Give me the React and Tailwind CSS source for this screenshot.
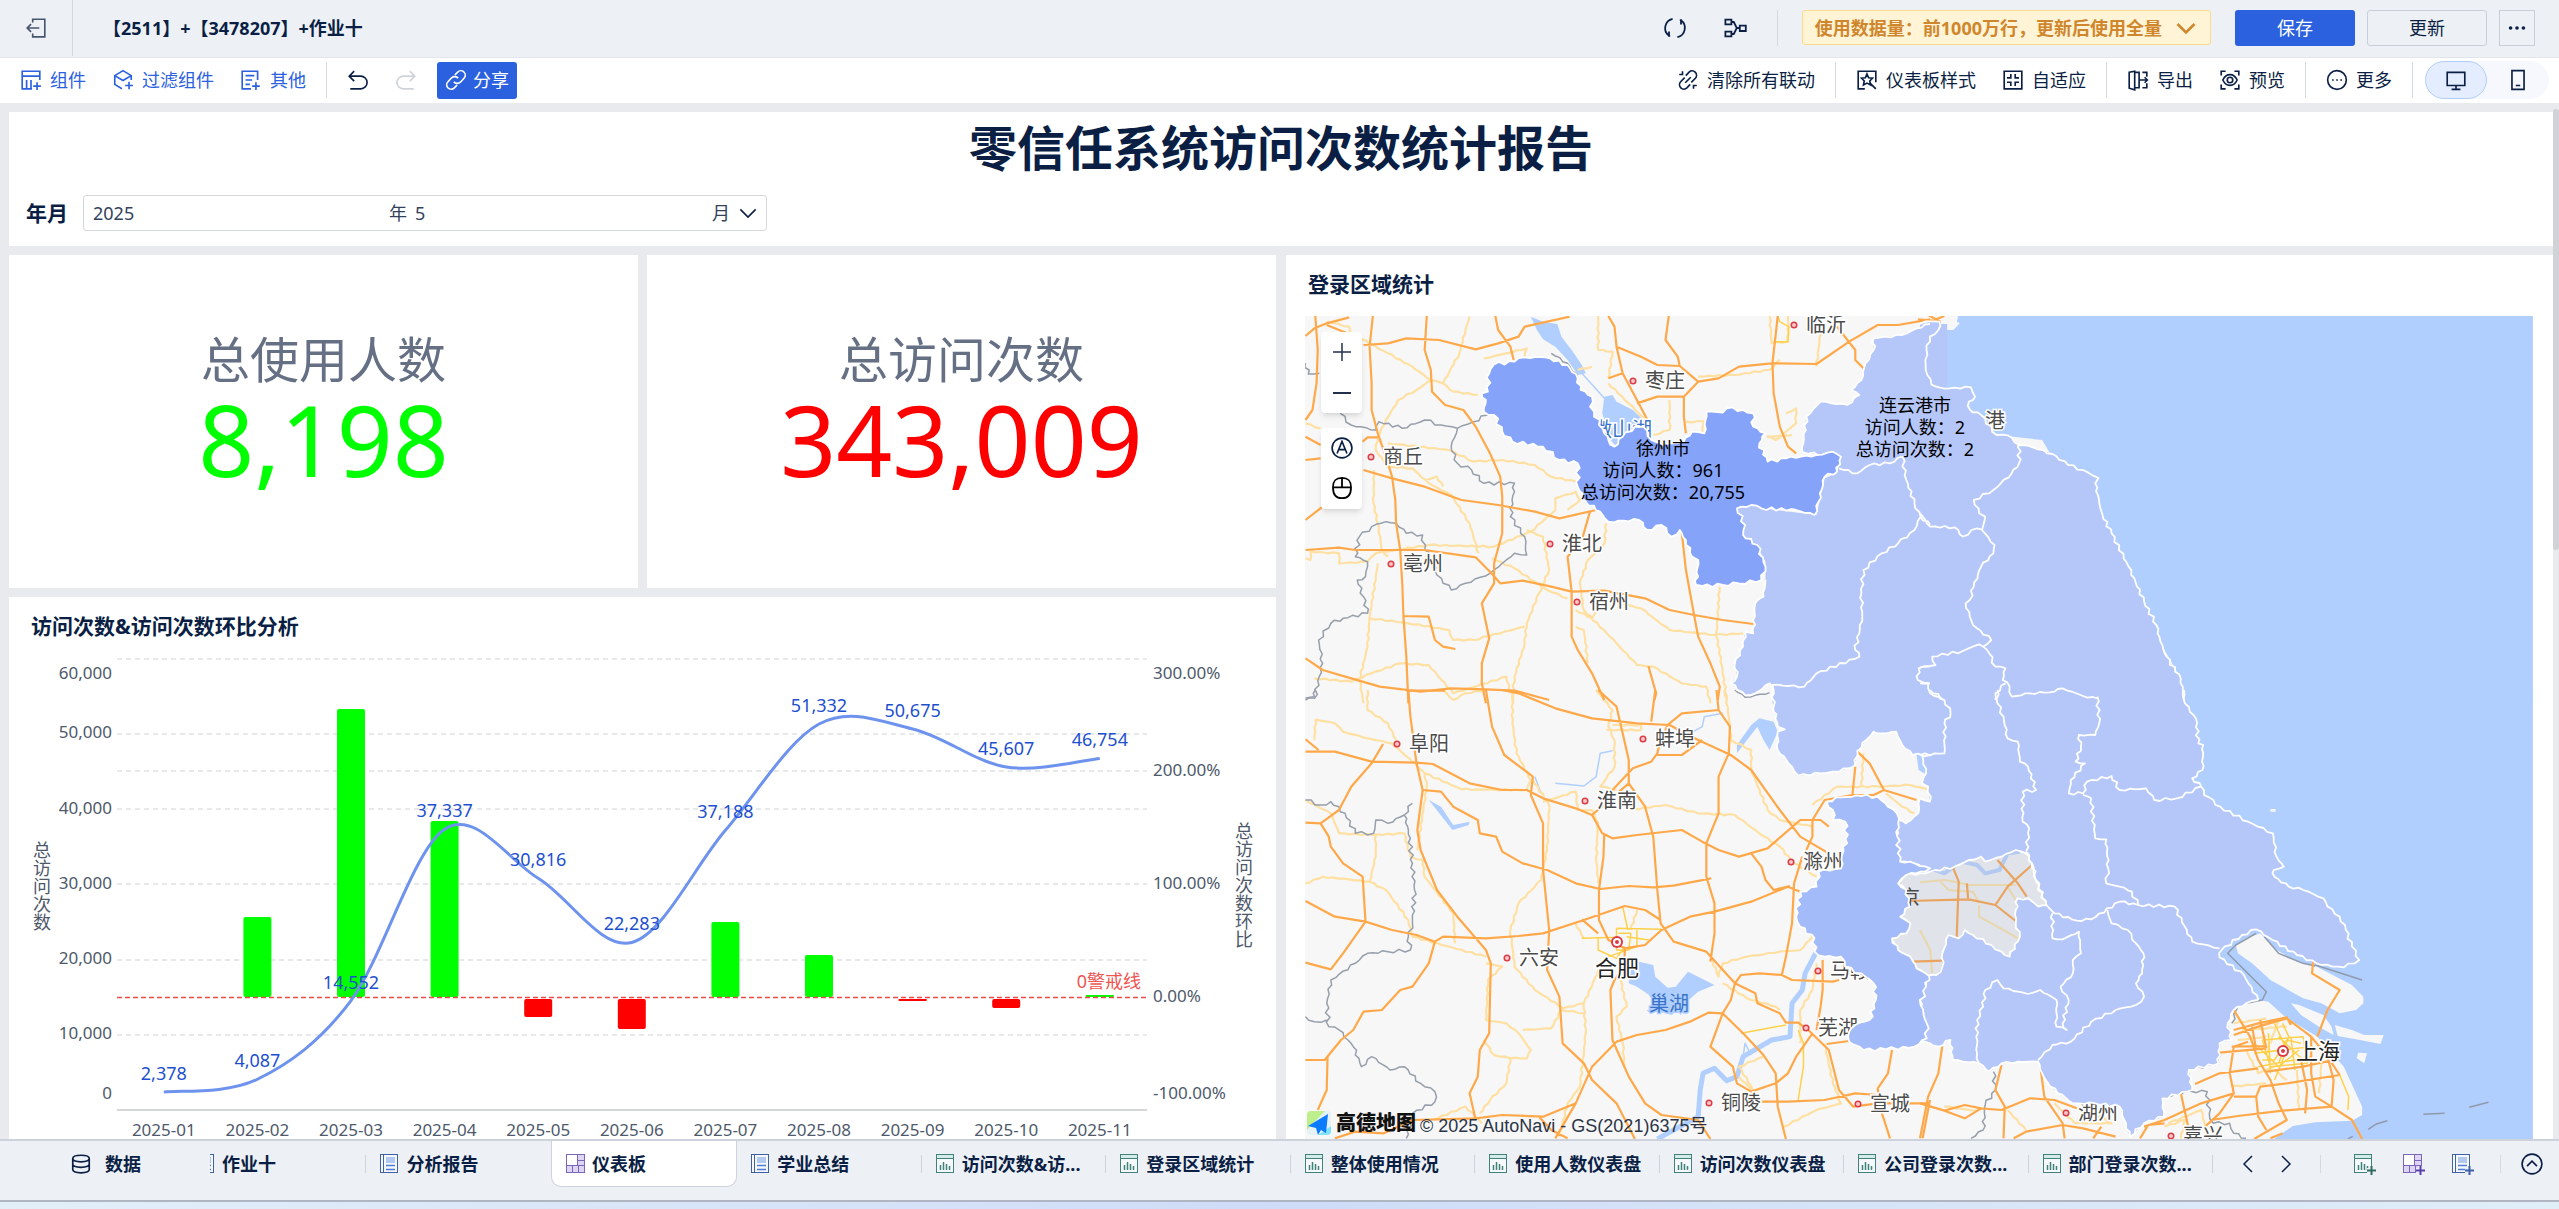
import React from 'react';
import { Ellipsis } from 'lucide-react';

const ICONS = {
  exit: <path d="M7 5V2h11v16H7v-3M13 10H2M5.500 6.500L2 10l3.500 3.500" />,
  refresh: <path d="M8 2.300A8 8 0 0 0 5 16.500M12 17.700A8 8 0 0 0 15 3.500M15 7V3.500h-1M5 13v3.500h1" />,
  tree: <path d="M2 3h5v4H2zM2 13h5v4H2zM14 8h5v4.500h-5zM7 5h2l2.500 5L9 15H7M11.500 10H14" />,
  widget: <path d="M18 10V2H2v16h9M2 6.500h16M6 10v8M10 10v8M15.500 12v7M12 15.500h7" />,
  filter: <path d="M17.500 10V6L10 1.500 2.500 6v8L9 18M2.500 6L10 10.500 17.500 6M15.500 11.500v7M12 15h7" />,
  other: <path d="M16 10V2H2v16h8M5 6h8M5 10h6M5 14h4M14.500 12v7M11 15.500h7" />,
  undo: <path d="M6.500 2L2 6.500 6.500 11M2 6.500h10.500a5.500 5.500 0 0 1 0 11.500H3" />,
  redo: <path d="M13.500 2L18 6.500 13.500 11M18 6.500H7.500a5.500 5.500 0 0 0 0 11.500H17" />,
  link: <path d="M9 5.500l2.500-2.700a4 4 0 0 1 5.800 5.600L14 12a4 4 0 0 1-6-.5M11 14.500l-2.500 2.700a4 4 0 0 1-5.800-5.600L6 8a4 4 0 0 1 6 .5" />,
  unlink: <path d="M8 6l3-3.200a4 4 0 0 1 5.700 5.600L13 12.200M12 14l-3 3.200a4 4 0 0 1-5.700-5.600L7 7.800M7.500 12.500l5-5M2 5h3V2M18 15h-3v3" />,
  style: <path d="M8 18H2V2h16v10M10 4.500l1.500 3.500 3.500.4-2.500 2.500.8 3.600L10 12.800l-3.200 1.700.7-3.600L5 8.400l3.500-.4zM13 13l5 5" />,
  fit: <path d="M2 2h16v16H2zM8 4.500V8H4.500M12 4.500V8h3.500M8 15.500V12H4.500M12 15.500V12h3.500" />,
  output: <path d="M2 3l5-1v17l-5-1.500zM7 3h4v14H7M14 3h4v4M14 17h4v-4M11 10h8M16 7.500l2.500 2.500-2.500 2.500" />,
  preview: <path d="M2 6V2h4M14 2h4v4M18 14v4h-4M6 18H2v-4M3.500 10c3-6.500 10-6.500 13 0-3 6.500-10 6.500-13 0zM10 7.500a2.500 2.500 0 1 0 0 5 2.500 2.500 0 0 0 0-5z" />,
  more: <path d="M10 1.500a8.500 8.500 0 1 0 0 17 8.500 8.500 0 0 0 0-17zM5.500 10h1.500M9.300 10h1.500M13 10h1.500" />,
  monitor: <path d="M2 3h16v12H2zM10 15v3.500M6 18.500h8" />,
  tablet: <path d="M4.500 1.500h11v17h-11zM8 15h4" />,
  database: <path d="M2.500 5c0-4 15-4 15 0s-15 4-15 0zM2.500 5v10c0 4 15 4 15 0V5M2.500 10c0 4 15 4 15 0" />,
  mouse: <path d="M2.500 9.500h15M10 1.500v8M10 1.500c-5 0-7.500 2-7.500 8s2.500 9 7.500 9 7.500-3 7.500-9-2.500-8-7.500-8z" />,
  satellite: <path d="M10 1a9 9 0 1 0 0 18 9 9 0 0 0 0-18zM5.500 15L10 4l4.500 11M7 11.500h6" />,
  down: <path d="M1.500 6L10 14.500 18.500 6" />,
  left: <path d="M14 2L6 10l8 8" />,
  right: <path d="M6 2l8 8-8 8" />,
  collapse: <path d="M10 1a9 9 0 1 0 0 18 9 9 0 0 0 0-18zM5.500 12L10 7.500 14.500 12" />,
};

const Icon = ({ name, className = 'size-[22px]', weight = 1.5 }) => (
  <svg viewBox="0 0 20 20" className={`${className} shrink-0`} fill="none" stroke="currentColor" strokeWidth={weight}>
    {ICONS[name]}
  </svg>
);

const SheetIcon = ({ type, plus }) => (
  <svg viewBox="0 0 23 22" className="h-[22px] w-[23px] shrink-0" fill="none">
    {type === 'chart' && (
      <g stroke="#3f837b">
        <rect x="1.500" y="1.500" width="17" height="18" fill="#fff" fillOpacity=".5" />
        <rect x="1.500" y="1.500" width="17" height="4" fill="#d5ebe7" />
        <path d="M5.500 12v5M8.500 9v8M11.500 11v6M14.500 13v4" strokeWidth="1.500" />
      </g>
    )}
    {type === 'report' && (
      <g stroke="#3f61a8">
        <rect x="1.500" y="1.500" width="17" height="18" fill="#fff" fillOpacity=".5" />
        <path d="M4.500 1.500v18" />
        <rect x="7.500" y="4.500" width="8" height="5" fill="#b3c8ee" stroke="#b3c8ee" />
        <path d="M7 12.500h9M7 16.500h9" stroke="#4d7bd6" strokeWidth="1.500" />
      </g>
    )}
    {type === 'board' && (
      <g stroke="#7a67ba">
        <rect x="1.500" y="1.500" width="18" height="18" fill="#ded5f5" />
        <rect x="1.500" y="1.500" width="11" height="11" fill="#fff" />
        <path d="M12.500 7.500h7M12.500 12.500h7M7.500 12.500v7M13.500 12.500v7" />
      </g>
    )}
    {plus && (
      <g strokeWidth="2">
        <path d="M18.500 13v9M14 17.500h9" stroke="#edf1f6" strokeWidth="5" />
        <path d="M18.500 13v9M14 17.500h9" stroke={plus} />
      </g>
    )}
  </svg>
);

const Divider = ({ className }) => <div className={`w-px bg-[#d5d9e0] ${className}`} />;

const ToolButton = ({ icon, children, className = '' }) => (
  <button className={`flex items-center gap-2 ${className}`}>
    <Icon name={icon} />
    {children}
  </button>
);

const Header = () => (
  <header className="flex h-[58px] shrink-0 items-center border-b border-[#e2e5ea] bg-[#edf1f6] pb-[2px]">
    <button aria-label="退出" className="flex w-[72px] justify-center text-[#48566d]">
      <Icon name="exit" />
    </button>
    <Divider className="h-14" />
    <h1 className="ml-[30px] flex-1 text-[18px] font-bold [text-spacing-trim:space-all]">【2511】+【3478207】+作业十</h1>
    <button aria-label="刷新" className="mr-9"><Icon name="refresh" className="size-6" /></button>
    <button aria-label="血缘"><Icon name="tree" className="size-6" /></button>
    <Divider className="ml-[30px] h-9" />
    <button className="ml-6 flex h-[35px] items-center gap-[14px] rounded-[3px] border border-[#ffdb8a] bg-[#fff4d6] pr-[14px] pl-3 font-bold text-[#cf862c]">
      使用数据量：前1000万行，更新后使用全量
      <Icon name="down" className="size-5" weight={2.5} />
    </button>
    <button className="ml-6 h-9 w-[120px] rounded-[3px] bg-[#2b61de] text-white">保存</button>
    <button className="ml-3 h-9 w-[120px] rounded-[3px] border border-[#c9cfd8]">更新</button>
    <button aria-label="更多操作" className="mr-6 ml-3 flex h-9 w-9 items-center justify-center border border-[#c9cfd8]">
      <Ellipsis size={22} />
    </button>
  </header>
);

const Toolbar = () => (
  <nav className="flex h-[45px] shrink-0 items-center bg-white pr-[10px] pb-px pl-5">
    <div className="flex items-center gap-[26px] text-[#2b61de]">
      <ToolButton icon="widget">组件</ToolButton>
      <ToolButton icon="filter">过滤组件</ToolButton>
      <ToolButton icon="other">其他</ToolButton>
    </div>
    <Divider className="ml-5 h-9" />
    <button aria-label="撤销" className="ml-5"><Icon name="undo" /></button>
    <button aria-label="重做" className="ml-[26px] text-[#d0d4da]"><Icon name="redo" /></button>
    <button className="ml-5 flex h-[37px] items-center gap-[6px] rounded-[3px] bg-[#2b61de] px-2 text-white">
      <Icon name="link" />
      分享
    </button>
    <div className="flex-1" />
    <ToolButton icon="unlink">清除所有联动</ToolButton>
    <Divider className="mx-5 h-9" />
    <ToolButton icon="style" className="mr-[26px]">仪表板样式</ToolButton>
    <ToolButton icon="fit">自适应</ToolButton>
    <Divider className="mx-5 h-9" />
    <ToolButton icon="output" className="mr-[26px]">导出</ToolButton>
    <ToolButton icon="preview">预览</ToolButton>
    <Divider className="mx-5 h-9" />
    <ToolButton icon="more">更多</ToolButton>
    <Divider className="mr-3 ml-5 h-9" />
    <div className="flex rounded-full bg-[#f6f8fd]">
      <button aria-label="电脑端" className="flex h-[38px] w-[62px] items-center justify-center rounded-full border border-[#b3cefa] bg-[#e3edfd]">
        <Icon name="monitor" />
      </button>
      <button aria-label="移动端" className="flex h-[38px] w-[62px] items-center justify-center">
        <Icon name="tablet" />
      </button>
    </div>
  </nav>
);

const TitleCard = () => (
  <section className="bg-white pb-[15px]">
    <h2 className="text-center text-[48px] leading-[72px] font-bold">零信任系统访问次数统计报告</h2>
    <div className="mt-[11px] flex items-center pl-[17px]">
      <label htmlFor="year" className="w-[57px] text-[21px] font-bold">年月</label>
      <div className="flex h-9 w-[684px] items-center rounded-[3px] border border-[#d5d8de] px-[9px] text-[#33415c]">
        <input id="year" defaultValue="2025" className="w-[296px] outline-none" />
        <span>年</span>
        <input aria-label="月份" defaultValue="5" className="ml-2 min-w-0 flex-1 outline-none" />
        <span>月</span>
        <Icon name="down" className="ml-[9px] size-[18px] text-[#0b1f45]" weight={1.8} />
      </div>
    </div>
  </section>
);

const Kpi = ({ label, value, color }) => (
  <section className="flex h-[333px] flex-col items-center bg-white pt-20">
    <div className="text-[49px] leading-[48px] text-[#667085]">{label}</div>
    <div className={`text-[98px] leading-[112px] ${color}`}>{value}</div>
  </section>
);

const VISITS = [
  ['2025-01', 2378, 0, 0],
  ['2025-02', 4087, 917, 997],
  ['2025-03', 14552, 709, 997],
  ['2025-04', 37337, 821, 997],
  ['2025-05', 30816, 999, 1017],
  ['2025-06', 22283, 999, 1029],
  ['2025-07', 37188, 922, 997],
  ['2025-08', 51332, 955, 997],
  ['2025-09', 50675, 999, 1001],
  ['2025-10', 45607, 999, 1008],
  ['2025-11', 46754, 995, 997],
];

const colX = (i) => 163.8 + i * 93.6;
const valY = (v) => 1110 - v * 0.00752;

const smoothPath = (pts) => {
  let d = `M${pts[0].join(' ')}`;
  for (let i = 0; i < pts.length - 1; i++) {
    const p0 = pts[i - 1] || pts[i];
    const p1 = pts[i];
    const p2 = pts[i + 1];
    const p3 = pts[i + 2] || p2;
    d += `C${p1[0] + (p2[0] - p0[0]) / 6} ${p1[1] + (p2[1] - p0[1]) / 6} ${p2[0] - (p3[0] - p1[0]) / 6} ${p2[1] - (p3[1] - p1[1]) / 6} ${p2[0]} ${p2[1]}`;
  }
  return d;
};

const VisitChart = () => (
  <section className="overflow-hidden bg-white">
    <h3 className="pt-3 pl-[22px] text-[21px] leading-[34px] font-bold">访问次数&amp;访问次数环比分析</h3>
    <svg viewBox="9 643 1267 500" className="w-full">
      <g stroke="#dfe1e4" strokeDasharray="5 4" strokeWidth="1.500">
        {[659, 734, 771, 809, 884, 960, 1035].map((y) => <path key={y} d={`M117 ${y}H1147`} />)}
      </g>
      <path d="M117 1110H1147" stroke="#c6c9ce" strokeWidth="1.500" />
      {VISITS.map(([m, , y1, y2], i) => y2 > 0 && (
        <rect key={m} x={colX(i) - 14} y={y1} width="28" height={y2 - y1} rx={y2 - y1 > 4 ? 2 : 0} fill={y2 === 997 ? '#00ff00' : '#ff0000'} />
      ))}
      <path d="M117 997.500H1147" stroke="#ec4a4a" strokeDasharray="5 3" strokeWidth="1.500" />
      <path d={smoothPath(VISITS.map(([, v], i) => [colX(i), valY(v)]))} fill="none" stroke="#6e93ee" strokeWidth="3" />
      <g className="text-[18px]" fill="#1d50cf" textAnchor="middle">
        {VISITS.map(([m, v], i) => <text key={m} x={colX(i)} y={valY(v) - 12}>{v.toLocaleString('en-US')}</text>)}
      </g>
      <text x="1141" y="988" textAnchor="end" fill="#ef5552" className="text-[18px]">0警戒线</text>
      <g className="text-[17px]" fill="#4e596b">
        {[[60, 673], [50, 732], [40, 808], [30, 883], [20, 958], [10, 1033], [0, 1093]].map(([v, y]) => (
          <text key={v} x="112" y={y + 6} textAnchor="end">{v ? `${v},000` : '0'}</text>
        ))}
        {[['300.00%', 673], ['200.00%', 770], ['100.00%', 883], ['0.00%', 996], ['-100.00%', 1093]].map(([t, y]) => (
          <text key={t} x="1153" y={y + 6}>{t}</text>
        ))}
        {VISITS.map(([m], i) => <text key={m} x={colX(i)} y="1136" textAnchor="middle">{m}</text>)}
      </g>
      <g className="text-[18px]" fill="#4e596b" textAnchor="middle">
        {[...'总访问次数'].map((c, i) => <text key={i} x="42" y={857 + i * 18}>{c}</text>)}
        {[...'总访问次数环比'].map((c, i) => <text key={i} x="1244" y={838 + i * 18}>{c}</text>)}
      </g>
    </svg>
  </section>
);

/* Map geometry is kept in four tiles, each with its own origin and scale. */
const TILES = {
  nw: 'translate(1290 250) scale(.40816 .33333)',
  ne: 'translate(1920 250) scale(.4075 .33333)',
  sw: 'translate(1290 690) scale(.40816 .33333)',
  se: 'translate(1920 690) scale(.4075 .33333)',
};

const SEA = {
  ne: ['95,190 90,215 97,220 80,240 45,240 24,260 16,300 14,345 18,375 28,404 60,416 125,412 135,440 120,455 122,478 150,495 188,555 300,570 640,1285 645,1360 1504,1360 1504,190'],
  se: ['640,-10 645,720 735,802 830,930 855,935 900,985 935,1010 975,1040 1040,1130 1085,1250 1085,1275 1060,1292 970,1297 915,1308 865,1350 1504,1350 1504,-10'],
};

const LAKES = {
  nw: [
    '590,200 605,240 620,268 650,290 680,330 705,375 725,370 715,345 690,300 665,260 655,222 620,215',
    '770,440 790,435 800,455 840,480 870,515 880,550 845,530 815,560 800,590 785,570 765,490',
  ],
  sw: [
    '855,815 890,825 895,860 925,893 945,890 975,845 1000,860 1040,885 1000,905 935,975 905,965 880,915 850,890 830,880 835,840',
    '1095,190 1095,165 1130,105 1150,85 1185,95 1195,125 1175,180 1160,150 1145,110 1120,150',
    '340,330 370,350 400,405 440,395 438,405 398,420',
    '1535,195 1560,195 1568,260 1540,240',
  ],
};

const RIVERS = {
  sw: ['1290,785 1262,850 1255,900 1230,940 1225,1040 1180,1050 1110,1100 1095,1160 1070,1172 1040,1135 1012,1150 1005,1200 1000,1280 900,1347'],
};

const STREAMS = {
  nw: ['715,370 745,410 770,445'],
  sw: ['650,280 720,288 750,260 760,190 790,182', '600,260 615,310', '980,130 1010,110 1015,80 1060,70', '1110,1100 1115,1060 1130,1095'],
};

const ISLANDS = {
  ne: ['45,190 95,190 90,215 97,220 82,240 60,235 48,225'],
  se: [
    '775,765 800,745 835,730 875,780 925,815 970,828 1060,885 1088,920 1088,940 1070,960 1030,970 985,940 940,925 860,870 815,820 780,790',
    '910,940 930,945 990,975 1010,1010 1015,1035 985,1015 935,975',
    '1018,1005 1060,1020 1090,1035 1138,1035 1130,1062 1080,1050 1025,1038',
    '1075,1088 1097,1090 1090,1120 1072,1105',
    '860,357 873,357 873,365 860,365',
  ],
};

const MINOR_ROADS = {
  nw: [
    '150,250 240,310 300,350 345,390 310,420 265,450 235,510 215,560',
    '440,200 430,240 415,310 375,400 345,390', '375,400 400,425 460,435', '90,215 145,230 150,260',
    '755,198 755,300 790,305 780,385', '740,350 705,360', '475,325 530,310 580,295 575,320',
    '1000,380 1090,375 1175,360 1200,330', '1175,198 1180,280 1220,275 1220,198',
    '780,400 830,460 870,510', '930,450 930,540 890,555', '970,515 1015,515 1010,545',
    '1215,490 1240,475 1240,520 1190,570 1170,560 1230,555', '1290,350 1300,240',
    '215,560 210,600 240,650 300,655 340,700 395,735 440,820 462,910',
    '240,580 390,600 450,635 520,630 600,645 640,680 700,695', '330,690 360,680 375,710',
    '205,660 205,760 215,820 225,900 240,920',
    '38,925 50,930 50,905 120,910 120,940 190,935 210,910 340,885 500,890 590,845 650,780 650,745 700,725 710,750 680,780',
    '495,925 550,955 630,1020 680,1045', '580,840 620,860 635,960 610,1030 580,1120 575,1180 550,1280 545,1360',
    '775,820 770,880 730,930 710,1000 720,1080 800,1180 850,1245 890,1250 960,1300 1020,1310 1030,1360',
    '810,1060 860,1075 930,1140 1040,1155 1110,1150', '195,1105 290,1120 390,1140 400,1170 450,1170 575,1130',
    '215,940 195,1105 190,1190 170,1290 180,1360', '60,1285 150,1295 200,1270 270,1240 340,1245 400,1330 530,1280 540,1330',
    '1052,1010 1045,1160 1060,1260 1070,1350', '38,520 75,535', '700,1130 720,1140 730,1240', '700,1080 740,1105 750,1080',
  ],
  sw: [
    '62,88 60,150', '62,88 110,100 130,125 190,145 250,160 300,215 330,250 420,298 580,300 590,270 555,190 545,100 545,0',
    '190,0 190,60 240,100 260,150', '375,0 400,30 430,10 480,0',
    '775,120 860,120 860,105 790,105', '750,0 790,60 780,110 795,150 795,230 775,265 760,290 800,300',
    '1065,0 1075,80 1080,150 1130,180 1130,240', '330,250 335,290 312,480',
    '38,330 100,370 120,430 200,435 280,430 295,500 325,510 330,560 400,670 405,760',
    '38,580 80,560 195,575 235,600 290,690 300,740 480,800', '210,435 210,500 195,575',
    '595,270 635,345 630,480 615,570 560,640 540,720 550,830 600,900 670,955 720,940 760,830',
    '620,335 700,305 705,360 740,360 755,400 750,500 755,580', '830,360 920,345 1000,370 1090,375 1150,430 1200,470 1235,520 1290,560',
    '1280,410 1200,390 1170,360 1130,240', '1280,345 1340,290 1440,290 1520,285 1568,300',
    '1030,800 1050,860 1060,820 1120,800 1200,785 1250,780 1280,740', '1060,880 1120,925 1190,950 1200,960',
    '1290,820 1280,900 1250,960 1250,1060', '480,820 520,830 485,870 480,990 530,1000 560,1030 590,1080 580,1105 540,1105 500,1095 475,1050',
    '540,1105 530,1180 490,1230 465,1270', '570,1020 640,1015 665,960 720,970', '720,940 725,1030 710,1190 680,1240 660,1340',
    '810,870 825,950 800,980 815,1060 820,1130', '1405,190 1400,290', '1310,1062 1330,1180 1350,1240 1290,1260 1210,1310',
    '700,700 720,745', '1100,1160 1140,1210 1100,1130 1160,1100', '350,1290 430,1250 470,1300', '850,660 835,720', '1460,310 1500,350 1530,370',
  ],
  se: [
    '770,1000 850,985', '780,1050 850,1040', '765,1190 850,1180', '925,1140 930,1260', '985,1120 980,1210', '610,1300 690,1260 700,1310',
    '215,1260 260,1320', '330,1240 380,1300 470,1300 430,1270', '600,1310 650,1290 640,1345', '800,1080 830,1150 870,1130', '790,1020 900,1010',
    '880,990 850,1090', '870,1140 900,1170', '60,1250 140,1262',
  ],
};

const CITY_ROADS = {
  nw: ['1195,198 1200,215 1222,230 1220,275 1185,275'],
  sw: [
    '715,745 800,742', '800,715 910,718', '815,650 828,720', '755,740 755,780 800,805 820,770', '825,740 880,750', '1105,1030 1215,1005',
    '1245,1020 1258,1060 1258,1130 1245,1230', '800,715 800,780 830,780 835,730 805,730', '850,720 850,770 780,800',
  ],
  se: [
    '840,1050 940,1040 950,1120 860,1130 840,1050', '870,1000 900,1080 870,1170', '820,1090 960,1070 1000,1090', '855,1030 860,1150',
    '910,1040 920,1140', '1030,1155 1052,1220 1050,1260', '840,1110 870,1110 900,1050 935,1060', '880,1040 940,1110', '890,1000 905,1040 880,1120',
    '820,1060 880,1130 930,1080', '830,1130 960,1100',
  ],
};

const HIGHWAYS = {
  nw: [
    '38,258 60,235 90,220 145,202', '90,225 140,250', '62,198 68,300 65,400 55,480 38,510',
    '203,198 195,290 200,400 200,480 215,550 235,620 250,680 258,750 260,820 270,900 275,1000 278,1100 285,1220 290,1360',
    '335,198 330,300 345,360 348,425 380,465 425,480 455,530 490,610 515,680 520,740 520,850 500,940 500,1000 470,1060 488,1165 470,1240 470,1300 480,1360',
    '180,285 240,280 285,265 365,270 455,298 510,280 560,260 575,230 685,200', '503,198 510,240 540,290 548,330',
    '780,198 795,230 800,290 815,370 850,450 880,520 880,555', '800,290 860,320 900,345 955,348 1000,395 965,440 965,500 970,550',
    '780,385 815,370', '928,198 920,270 950,320 955,348', '1000,395 1050,385 1100,350 1180,340 1290,342 1370,275 1440,225 1490,225 1568,208',
    '1195,198 1182,340 1185,430 1200,530 1220,590 1240,610', '1340,230 1385,300 1385,330 1405,355', '850,460 900,440 965,440',
    '180,660 250,685 330,710 420,750 510,765 600,785 660,805 750,780', '38,810 80,770', '38,560 75,585', '38,630 75,625', '178,575 190,562 215,562',
    '38,900 120,893 160,900 330,900 455,922 490,965 515,1000 570,992 640,1010 690,1025 770,1022 870,1045 930,1080 990,1095 1060,1110 1135,1122',
    '735,785 715,870 680,920 690,1025 690,1160 705,1200 740,1270 770,1350', '960,850 970,960 990,1095 1000,1160 1030,1240 1053,1310 1048,1350',
    '278,1098 340,1100 355,1170 375,1190 405,1197', '38,1225 80,1260 150,1285 220,1310 320,1325 395,1315 480,1318 550,1322 635,1350', '878,1248 897,1330 893,1350',
  ],
  ne: ['-5,208 30,212 60,198', '20,195 50,215'],
  sw: [
    '290,0 295,80 310,220 325,300 312,420 320,480 360,600 410,680 480,780 492,820 488,1030 465,1080 460,1160 440,1210 455,1290', '285,2 380,2',
    '38,185 110,185 200,215 310,218 350,222 440,280 520,300 580,300 620,325 700,355 740,375 765,430 790,445 850,435 960,420 1010,455 1050,480 1100,500 1170,475 1250,390 1300,390 1320,410',
    '38,148 70,180', '38,398 75,400 120,360 150,290 200,220 228,162', '75,400 95,440 100,470 130,520 178,560 185,695 130,790 100,838 38,818',
    '38,633 110,680 185,695 250,720 310,735 355,755 375,740 480,745 560,738 620,730 720,690 820,648 870,660 908,690',
    '480,0 495,110 525,195 595,260 590,315 620,400 620,540 635,720 630,840 660,920 668,1060 720,1120 740,1170 800,1240 845,1347',
    '520,0 560,10 650,55 740,85 850,100 930,105 1000,150 1080,195 1130,240 1200,360 1250,440 1320,490',
    '755,0 800,50 815,130 830,210 830,280 870,350 890,440 900,600 908,700 940,755 1020,785 1090,880 1140,910 1145,940 1200,970 1215,998 1245,998 1270,1020 1320,1080 1345,1200 1380,1250 1440,1240 1568,1240',
    '895,0 885,95', '1045,0 1050,60 960,70 925,105 905,165 900,190 885,215 840,235 790,300', '900,195 960,195 1010,150',
    '1050,60 1078,110 1075,190 1050,260 1050,370 1020,460 1020,560 1040,640 1040,730 1030,815',
    '325,300 370,305 400,350 460,390 465,430 505,440 520,485 570,520 630,540 700,580 760,597 830,588 890,592 940,587 1032,565',
    '770,430 768,500 757,600 757,690 780,750 820,775 870,765 910,720 980,680 1040,665 1130,635 1220,590 1250,605', '1130,490 1155,530 1165,570 1185,600 1225,588',
    '830,280 740,375', '1255,500 1235,580 1230,700 1215,800 1205,855', '1385,230 1378,315 1430,315 1455,300 1535,330',
    '1378,315 1310,330 1280,390 1280,440 1265,480', '1390,185 1420,220 1455,300', '1090,880 1105,855 1150,850 1205,855 1230,870 1330,875 1345,870',
    '1090,880 1080,930 1060,970 1025,968 980,995 920,1020 850,1035 800,1055 740,1130 700,1240 650,1345',
    '1060,970 1110,1030 1160,1095 1190,1150 1195,1250 1215,1347', '1060,970 1030,1070 1085,1130 1095,1180 1130,1205 1190,1180 1220,1150 1240,1100 1280,1030',
    '1130,1235 1220,1235 1310,1230 1385,1210 1440,1215', '820,770 820,830 795,870 785,900 790,1050 830,1160 870,1240 910,1275 1000,1290 1030,1347',
    '1305,810 1305,900 1300,950 1290,1020', '1370,1053 1315,1062', '1475,1080 1465,1150 1440,1195 1445,1250 1470,1345', '1568,1230 1550,1345',
    '355,755 340,820 300,890 270,900 225,960 180,965 155,1020 125,1050 85,1110 38,1110', '92,1100 90,1200 68,1260', '715,688 755,730',
    '110,1345 160,1325 230,1330 300,1290 455,1285 520,1275 620,1280 700,1240', '610,1280 640,1320 680,1345',
  ],
  se: [
    '770,960 810,1040 830,1110 860,1170 880,1240 900,1290 820,1347', '770,1035 830,1010 900,985 960,1040 1000,1100 1030,1155',
    '805,1055 770,1070 760,1150 770,1210 735,1270 700,1310', '770,1020 830,1000 900,982 910,1005', '735,1088 850,1075', '675,1182 735,1150 830,1135', '850,1145 940,1130 1015,1110',
    '960,1040 960,1150 970,1220 1010,1250 1060,1290 1085,1347', '1000,1100 1015,1170 1010,1250 890,1262 780,1278 715,1290', '935,1110 950,1200 945,1270',
    '770,1220 825,1220 835,1190 900,1180 1030,1155', '825,1220 830,1280 850,1320', '835,990 850,1075', '815,1010 825,1080', '550,1310 600,1290 690,1240 770,1210',
    '640,1210 660,1320', '765,1070 850,1068', '965,812 962,850 1030,900 1000,960 975,1040', '55,1065 45,1150 20,1220 0,1345', '200,1125 185,1200 208,1250 205,1345',
    '295,1125 305,1220 350,1300 355,1345', '0,1240 60,1262 110,1245 150,1255 200,1260 270,1225 330,1230 385,1255', '60,1262 110,1285 150,1255',
    '230,1345 260,1325 350,1305 400,1315 480,1340', '425,1345 445,1310', '540,1345 560,1305 600,1300', '860,1345 890,1330',
  ],
};

const PROVINCES = {
  nw: [
    '38,340 45,372 72,370', '123,490 150,525 210,540 218,515 275,535 330,510 370,525 410,535 395,590 410,640 445,660 475,700 550,700 540,800 575,860 580,915 550,910 520,940 490,970 430,1000 395,1020 360,975 350,930 330,900 325,855 285,850 260,820 235,815 200,830 170,860 160,920 190,935 185,980 165,990 180,1040 190,1090 130,1105 100,1120 70,1170 80,1240 60,1345 38,1350',
    '410,535 450,515 490,487', '640,310 680,340 705,385',
  ],
  ne: ['50,215 58,250'],
  sw: [
    '38,330 75,345 100,335 135,370 160,430 205,430 210,390 240,400 280,375 300,340',
    '280,375 290,420 300,520 305,600 300,700 290,740 295,780 240,785 190,790 160,820 100,870 90,940 95,1010 120,1020 155,1070 175,1130 200,1100 245,1140 280,1130 320,1180 355,1205 355,1235 300,1270 285,1345',
    '38,980 60,995 90,990', '1090,0 1115,22 1175,8', '38,25 60,20 62,0',
  ],
  se: [
    '180,1145 185,1200 160,1245 155,1320 125,1345', '595,1225 650,1205 705,1205 710,1270 720,1300 760,1300 770,1330 800,1345',
    '735,1060 733,1120 655,1140', '780,945 765,1000',
  ],
};

const SEA_LINES = {
  se: ['825,730 775,765 755,790 850,905 840,930 780,945', '970,825 1085,870', '845,740 880,790 940,820 970,828', '1235,1273 1287,1270', '1348,1252 1395,1237', '1100,1318 1120,1302 1147,1292', '1050,1347 1062,1339'],
};

const COAST_NE = '0,222 30,214 48,215 45,240 24,260 16,300 14,345 18,375 28,404 60,416 125,412 135,440 120,455 122,478 150,495 188,555 215,556 243,585 265,587 325,612 363,645 400,660 438,684 430,700 440,760 448,795 470,850 512,950 550,1055 580,1125 590,1175 605,1220 640,1285 648,1350';
const COAST_SE = '648,0 650,40 678,88 683,160 695,165 693,240 668,265 690,290 697,315 720,330 725,345 805,395 866,430 875,500 893,530 868,540 870,560 905,590 940,600 990,625 1000,650 1030,680 1045,720 1060,770 1078,810 1040,832 985,825 925,795 865,750 825,718 790,735 740,780 735,802 795,855 830,930';
const SOUTH_SE = '830,930 800,940 770,960 755,1000 765,1050 735,1060 733,1120 660,1140 668,1200 595,1225 598,1280 550,1300 515,1340 490,1250 430,1240 375,1240 320,1190 300,1150 290,1115 240,1115 200,1120 170,1145 145,1120 80,1110 75,1050 45,1070 0,1050 10,1010 0,930 20,860';
const ENCLAVE_SE = '0,195 5,195 15,250 5,280 20,290 24,335 0,325 -4,370 -35,400 -55,390 -58,440 -50,515 0,525';
const WEST_NW = '1568,222 1535,235 1500,255 1430,265 1430,300 1410,340 1400,390 1375,420 1395,435 1365,465 1300,455 1265,500 1255,605 1350,625';
const WEST_NW2 = '1165,990 1160,1040 1140,1060 1135,1150 1115,1145 1110,1190 1090,1240 1095,1280 1080,1300 1115,1335 1140,1330 1175,1300 1182,1310';
const WEST_SW = '1182,-5 1185,50 1195,110 1212,118 1195,125 1195,180 1230,230 1245,257 1300,250 1345,245 1385,225 1390,182 1412,150 1430,125 1450,130 1485,125 1500,165 1525,195 1568,195';

const LIGHT = {
  nw: [`1610,222 ${WEST_NW} 1340,670 1310,685 1290,795 1155,775 1135,765 1095,775 1105,825 1110,855 1145,890 1165,935 ${WEST_NW2} 1182,1360 1610,1360`],
  ne: [`${COAST_NE} 648,1360 0,1360`],
  sw: [`${WEST_SW} 1600,195 1600,-10`],
  se: [`0,-10 648,-10 ${COAST_SE} ${SOUTH_SE} 0,560 ${ENCLAVE_SE.split(' ').reverse().join(' ')}`],
};

const XUZHOU = '500,343 550,335 575,322 625,322 680,345 705,385 712,420 740,440 735,470 745,485 770,550 780,570 795,590 815,560 845,530 865,530 885,570 915,585 965,575 985,545 1015,550 1020,485 1060,488 1070,475 1110,480 1135,490 1135,530 1165,550 1150,580 1170,635 1215,625 1290,615 1330,605 1350,620 1340,665 1310,680 1295,755 1285,795 1240,780 1155,775 1130,765 1095,775 1115,825 1110,855 1145,885 1165,950 1155,990 1100,1000 1060,1005 1010,1008 995,1005 1000,930 985,920 970,870 955,840 935,860 910,825 875,840 855,810 780,815 760,785 725,755 705,710 705,640 660,630 620,590 545,575 520,545 500,495 475,485 480,450 470,430 485,425 488,370 500,343';
const NANJING = '1315,335 1350,322 1400,318 1440,320 1465,350 1487,370 1490,400 1488,440 1495,515 1530,520 1568,535 1545,545 1510,555 1490,580 1510,600 1518,650 1495,680 1520,700 1510,730 1475,745 1490,780 1520,800 1535,835 1566,858 1558,890 1545,945 1560,1000 1560,1045 1530,1070 1460,1078 1405,1080 1370,1055 1370,1025 1385,1005 1420,990 1435,930 1430,880 1410,860 1360,830 1350,800 1310,800 1285,785 1285,745 1250,710 1240,680 1250,605 1290,590 1295,545 1350,535 1355,470 1365,460 1360,395 1330,390 1330,360 1315,335';
const ZHENJIANG = '-54,580 -36,555 0,550 25,545 85,530 120,510 150,500 160,515 200,500 235,480 260,490 275,520 285,570 310,645 290,650 265,625 240,625 235,660 235,700 245,740 220,800 200,785 175,765 130,735 110,720 95,745 70,735 55,790 55,830 40,855 20,858 -11,835 -26,800 -56,780 -71,745 -36,730 -26,700 -51,680 -28,650 -36,600 -54,580';

const CITY_LINES = {
  nw: [
    WEST_NW, WEST_NW2, '1345,655 1390,670 1420,645 1470,640 1500,620 1510,690 1530,760 1545,800 1530,840 1490,880 1450,910 1405,960 1400,1030 1402,1100 1385,1200 1395,1220 1290,1270 1260,1310 1182,1305 1182,1350',
    '1545,800 1568,825', '1568,1250 1540,1255 1538,1290 1568,1300',
  ],
  ne: [
    COAST_NE, '0,790 25,830 85,832 105,860 140,835 155,840', '243,580 243,640 225,670 180,720 132,750 145,790 160,800 152,840 183,885 180,910 150,950 132,1010 122,1050 112,1060 130,1125 175,1170 155,1190 170,1210 185,1250 210,1255 203,1290 220,1310 225,1340 270,1330 330,1325 350,1315 400,1338 435,1345',
    '155,1190 145,1183 105,1203 30,1220 38,1245 0,1253', '210,1300 185,1330 185,1350', '0,1300 20,1300 25,1330 58,1350',
  ],
  sw: [WEST_SW],
  se: [
    COAST_SE, SOUTH_SE, ENCLAVE_SE, '25,0 60,30 75,70 60,100 60,190 0,195', '435,20 440,100 430,135 390,135 395,170 382,215 405,220 370,270 365,310 400,310 410,275 470,258 490,300 555,295 575,330 630,325 690,290',
    '190,0 190,40 205,80 215,145 240,155 245,215 265,230 285,300 252,305 252,395 268,415 260,485', '400,315 420,325 430,445 457,448 462,535 457,580 490,590 520,605 535,645',
    '260,485 275,520 285,575 310,645 330,670 385,692 420,688 490,635 535,645 625,650 668,755 735,775',
    '325,670 325,745 350,748 390,725 395,790 375,810 375,850 345,890 365,930 350,1000 360,1020 335,1010 335,930 295,900 265,912 205,895 190,870 160,900 155,950 140,990 140,1090 145,1120',
    '460,660 470,700 510,720 530,760 548,790 545,850 530,880 550,920 530,945 480,960 420,995 370,1055 325,1065 290,1110',
  ],
};

const ZHENJIANG_ROADS = ['80,530 95,575 90,745', '115,580 118,625', '-30,633 120,628 185,645 235,693', '185,645 215,590 275,525', '190,510 240,580 262,620', '-20,815 58,812'];
const ZHENJIANG_MINOR = ['0,577 60,570 85,575 120,585 235,585', '145,645 145,680 190,710 240,745', '0,720 25,780 30,850', '50,575 70,600 130,605 145,640', '215,590 235,630'];

/* Splits long segments and shifts the new points so borders look surveyed. */
const roughen = (line, amp = 5) => {
  const pts = line.split(' ').map((p) => p.split(',').map(Number));
  const out = [pts[0]];
  for (let i = 1; i < pts.length; i++) {
    const [x1, y1] = pts[i - 1];
    const [x2, y2] = pts[i];
    const len = Math.hypot(x2 - x1, y2 - y1);
    const n = Math.max(1, Math.round(len / 13));
    for (let k = 1; k < n; k++) {
      const r = Math.sin((x1 + y2) * 12.9 + k * 78.2) * amp;
      out.push([x1 + ((x2 - x1) * k) / n - ((y2 - y1) / len) * r, y1 + ((y2 - y1) * k) / n + ((x2 - x1) / len) * r]);
    }
    out.push(pts[i]);
  }
  return out.map((p) => p.map(Math.round).join(',')).join(' ');
};

const Layer = ({ data, rough, closed, ...rest }) => (
  <g fill="none" strokeLinejoin="round" {...rest}>
    {Object.entries(data).map(([tile, lines]) => (
      <path
        key={tile}
        transform={TILES[tile]}
        vectorEffect="non-scaling-stroke"
        d={lines.map((l) => `M${rough ? roughen(l, rough) : l}${closed ? 'Z' : ''}`).join('')}
      />
    ))}
  </g>
);

const CITIES = [
  ['临沂', 1806, 325], ['枣庄', 1645, 381], ['商丘', 1383, 457], ['淮北', 1562, 544], ['亳州', 1403, 564], ['宿州', 1589, 602],
  ['阜阳', 1409, 744], ['蚌埠', 1655, 739], ['淮南', 1597, 801], ['滁州', 1803, 862], ['六安', 1519, 958], ['马鞍山', 1830, 971],
  ['芜湖', 1818, 1028], ['湖州', 2078, 1113], ['嘉兴', 2183, 1136], ['铜陵', 1721, 1103], ['宣城', 1870, 1104],
];

const CityMap = () => (
  <svg viewBox="1305 316 1228 823" className="block w-full">
    <rect x="1305" y="316" width="1228" height="823" fill="#f7f7f7" />
    <Layer data={SEA} closed fill="#b1cffe" />
    <Layer data={LAKES} closed fill="#b1cffe" />
    <Layer data={RIVERS} stroke="#b1cffe" strokeWidth="5" />
    <Layer data={STREAMS} stroke="#b1cffe" strokeWidth="1.500" />
    <Layer data={ISLANDS} closed fill="#f7f7f7" />
    <Layer data={SEA_LINES} stroke="#8f9aab" strokeWidth="1.500" />
    <Layer data={MINOR_ROADS} rough={2} stroke="#ffe0a3" strokeWidth="2.200" />
    <Layer data={CITY_ROADS} stroke="#ffd149" strokeWidth="1.500" />
    <Layer data={PROVINCES} rough={5} stroke="#969fab" strokeWidth="1.500" />
    <Layer data={HIGHWAYS} stroke="#ffa849" strokeWidth="2.200" />
    <g className="text-[20px]" fill="#4b4b4b" stroke="#fff" strokeWidth="3" paintOrder="stroke">
      {CITIES.map(([name, x, y]) => (
        <g key={name}>
          <circle cx={x - 12} cy={y} r="3.500" fill="#dc3c46" stroke="none" />
          <circle cx={x - 12} cy={y} r="2" fill="#f9c6ca" stroke="none" />
          <text x={x} y={y + 7}>{name}</text>
        </g>
      ))}
      <text x="1592" y="437" fill="#3a74c8">微山湖</text>
      <text x="1649" y="1011" fill="#3a74c8" stroke="#b1cffe">巢湖</text>
      <text x="1985" y="428">港</text>
    </g>
    <g className="text-[22px]" fill="#222" stroke="#fff" strokeWidth="3" paintOrder="stroke">
      {[['合肥', 1595, 976, 1617, 942], ['上海', 2296, 1059, 2283, 1051]].map(([name, x, y, cx, cy]) => (
        <g key={name}>
          <circle cx={cx} cy={cy} r="6" fill="#dc3c46" stroke="none" />
          <circle cx={cx} cy={cy} r="4" fill="#fff" stroke="none" />
          <circle cx={cx} cy={cy} r="2" fill="#dc3c46" stroke="none" />
          <text x={x} y={y}>{name}</text>
        </g>
      ))}
    </g>
    <Layer data={LIGHT} closed fill="#b5c7f9" />
    <Layer data={{ se: [ZHENJIANG] }} closed fill="#e0e3ea" />
    <Layer data={{ se: ['25,535 60,550 100,515 140,525 160,550 195,540 215,490 245,485'] }} stroke="#b3c9f0" strokeWidth="4" />
    <Layer data={{ se: ZHENJIANG_MINOR }} stroke="#e8d6ad" strokeWidth="2" />
    <Layer data={{ se: ZHENJIANG_ROADS }} stroke="#e8a460" strokeWidth="2.200" />
    <text x="1900" y="905" fill="#4b4b4b" className="text-[20px]">京</text>
    <Layer data={CITY_LINES} rough={4} stroke="#fff" strokeWidth="1.800" />
    <Layer data={{ se: [ZHENJIANG] }} rough={4} stroke="#fff" strokeWidth="1.800" />
    <Layer data={{ sw: [NANJING] }} rough={5} fill="#a4bbf9" stroke="#fff" strokeWidth="1.800" />
    <Layer data={{ nw: [XUZHOU] }} rough={5} fill="#85a3f8" stroke="#fff" strokeWidth="1.800" />
    <g className="text-[18px]" fill="#000" textAnchor="middle">
      <text x="1663" y="455">徐州市</text>
      <text x="1663" y="477">访问人数：961</text>
      <text x="1663" y="499">总访问次数：20,755</text>
      <text x="1915" y="412">连云港市</text>
      <text x="1915" y="434">访问人数：2</text>
      <text x="1915" y="456">总访问次数：2</text>
    </g>
    <rect x="1307" y="1111" width="24" height="24" rx="4" fill="#e6f3f6" />
    <path d="M1307 1130v-15a4 4 0 0 1 4-4h14z" fill="#bdf08c" />
    <path d="M1318 1135l13-9v5a4 4 0 0 1-4 4z" fill="#7fe3fb" />
    <path d="M1328 1114l-20 12 8 2 2 7 3-5 5 3z" fill="#0b7bff" />
    <text x="1336" y="1130" className="text-[20px] font-black" fill="#111">高德地图</text>
    <text x="1420" y="1132" fill="#2b3547" className="font-['Liberation_Sans','Noto_Sans_CJK_SC',sans-serif] text-[18px]">
      © 2025 AutoNavi - GS(2021)6375号
    </text>
  </svg>
);

const MapCard = () => (
  <section className="overflow-hidden bg-white pr-5 pl-[19px]">
    <h3 className="pt-3 pb-[15px] pl-[3px] text-[21px] leading-[34px] font-bold">登录区域统计</h3>
    <div className="relative">
      <CityMap />
      <div className="absolute top-4 left-4 flex flex-col gap-[15px]">
        <div className="flex h-[81px] w-[41px] flex-col items-center justify-around rounded-[4px] bg-white text-[#22304d] shadow-md">
          <button aria-label="放大" className="flex size-8 items-center justify-center">
            <svg viewBox="0 0 18 18" className="size-[18px]" stroke="currentColor" strokeWidth="1.500"><path d="M0 9h18M9 0v18" /></svg>
          </button>
          <button aria-label="缩小" className="flex size-8 items-center justify-center">
            <svg viewBox="0 0 18 18" className="size-[18px]" stroke="currentColor" strokeWidth="2"><path d="M0 9h18" /></svg>
          </button>
        </div>
        <div className="flex h-[81px] w-[41px] flex-col items-center justify-around rounded-[4px] bg-white shadow-md">
          <button aria-label="自动"><Icon name="satellite" /></button>
          <button aria-label="鼠标缩放" className="text-black"><Icon name="mouse" className="size-6" /></button>
        </div>
      </div>
    </div>
  </section>
);

const SHEETS = [
  ['作业十', 'report'],
  ['分析报告', 'report'],
  ['仪表板', 'board'],
  ['学业总结', 'report'],
  ['访问次数&访...', 'chart'],
  ['登录区域统计', 'chart'],
  ['整体使用情况', 'chart'],
  ['使用人数仪表盘', 'chart'],
  ['访问次数仪表盘', 'chart'],
  ['公司登录次数...', 'chart'],
  ['部门登录次数...', 'chart'],
];

const Footer = () => (
  <footer className="shrink-0">
    <div className="flex h-[63px] border-t-2 border-b-2 border-t-[#cdd2dc] border-b-[#b0b6c1] bg-[#edf1f6] font-bold">
      <button className="flex h-[46px] w-[182px] items-center gap-[13px] pl-[70px]">
        <Icon name="database" />
        数据
      </button>
      <div className="flex flex-1">
        {SHEETS.map(([name, type], i) => {
          const active = type === 'board';
          return (
            <button
              key={name}
              className={`relative flex h-[46px] min-w-0 flex-1 items-center gap-1 pl-[13px] whitespace-nowrap ${active ? 'rounded-b-[10px] border border-t-0 border-[#cdd2dc] bg-white' : ''}`}
            >
              {/* the first sheet is scrolled partly under the data button */}
              {i === 0 && <span className="absolute top-0 left-0 h-full w-7 bg-[#edf1f6]" />}
              <SheetIcon type={type} />
              {name}
              {i !== 1 && !active && <span className="absolute right-0 h-[18px] w-px bg-[#cdd2dc]" />}
            </button>
          );
        })}
      </div>
      <div className="flex h-[46px] w-[346px] items-center">
        <button aria-label="上一页" className="ml-[25px]"><Icon name="left" className="size-5" /></button>
        <button aria-label="下一页" className="ml-[18px]"><Icon name="right" className="size-5" /></button>
        <Divider className="ml-6 h-[18px]" />
        <button aria-label="新建组件" className="ml-8"><SheetIcon type="chart" plus="#2f6b60" /></button>
        <button aria-label="新建仪表板" className="ml-[26px]"><SheetIcon type="board" plus="#5a3fae" /></button>
        <button aria-label="新建报告" className="ml-[26px]"><SheetIcon type="report" plus="#3f61a8" /></button>
        <Divider className="ml-[26px] h-[18px]" />
        <button aria-label="展开" className="ml-5"><Icon name="collapse" /></button>
      </div>
    </div>
    <div className="h-[7px] bg-linear-to-r from-[#e3eff8] via-[#cfdcf8] to-[#e0eef8]" />
  </footer>
);

export default function App() {
  return (
    <div className="flex h-screen flex-col bg-[#e8eaee] font-['Noto_Sans','Noto_Sans_CJK_SC',sans-serif] text-[18px] leading-6 text-[#0b1f45]">
      <Header />
      <Toolbar />
      <div className="relative min-h-0 flex-1 overflow-hidden">
        <main className="flex flex-col gap-[9px] py-[9px] pr-[6px] pl-[9px]">
          <TitleCard />
          <div className="grid grid-cols-2 gap-[10px]">
            <div className="flex flex-col gap-[9px]">
              <div className="grid grid-cols-2 gap-[9px]">
                <Kpi label="总使用人数" value="8,198" color="text-[#00ff00]" />
                <Kpi label="总访问次数" value="343,009" color="text-[#ff0000]" />
              </div>
              <VisitChart />
            </div>
            <MapCard />
          </div>
        </main>
        <div className="absolute top-[6px] right-0 h-[441px] w-[6px] rounded-full bg-[#cfd2d7]" />
      </div>
      <Footer />
    </div>
  );
}
